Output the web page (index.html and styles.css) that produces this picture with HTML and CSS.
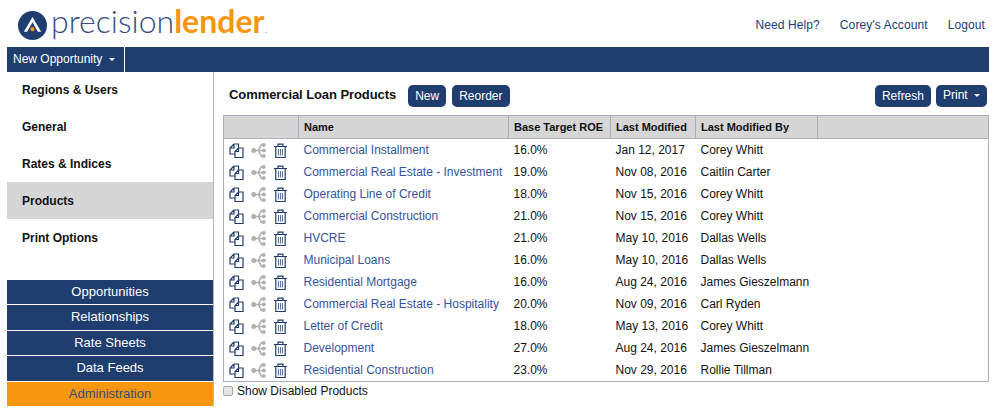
FILE: index.html
```html
<!DOCTYPE html>
<html lang="en">

<head>
  <meta charset="UTF-8" />
  <title>Products | PrecisionLender</title>
  <link rel="stylesheet" href="styles.css">
</head>

<body>
  <svg class="icon-defs" width="0" height="0">
    <symbol id="copy" viewBox="0 0 15 15">
      <path d="M5 1H9.500V5M5 1L1 5V11H6M5 1V5H1" fill="none" stroke="#203d6f" stroke-width="1.200" />
      <path d="M9.500 5H14V14.500H6V8.500zM9.500 5V8.500H6" fill="#fff" stroke="#203d6f" stroke-width="1.200" />
    </symbol>
    <symbol id="share" viewBox="0 0 15 15">
      <path d="M2.500 7.500h12M12.500 1.500H10.500L7.500 7.500L10.500 13.500h2" fill="none" stroke="#b0b0b0" stroke-width="1.600" />
      <circle cx="2.800" cy="7.500" r="2.500" fill="#b0b0b0" />
      <circle cx="12.800" cy="2" r="1.900" fill="#b0b0b0" />
      <circle cx="12.800" cy="7.500" r="1.900" fill="#b0b0b0" />
      <circle cx="12.800" cy="13" r="1.900" fill="#b0b0b0" />
    </symbol>
    <symbol id="trash" viewBox="0 0 15 15">
      <path d="M1 3.500h13M5 3.500V1.200h5v2.300M2.800 3.500v11h9.400v-11" fill="none" stroke="#203d6f" stroke-width="1.200" />
      <path d="M5.500 6v6.500M7.500 6v6.500M9.500 6v6.500" fill="none" stroke="#5f7394" stroke-width="1.100" />
    </symbol>
  </svg>

  <header class="top-header">
    <div class="logo">
      <svg class="logo-mark" viewBox="0 0 32 32" width="29" height="29">
        <circle cx="16" cy="16" r="16" fill="#203d6f" />
        <path d="M16 6.500L25.500 23H22L16 12.500L10 23H6.500z" fill="#fff" />
        <circle cx="16" cy="20" r="2.300" fill="#f7960f" />
      </svg>
      <span class="logo-text">precision<strong>lender</strong><small>.</small></span>
    </div>
    <nav class="top-links">
      <a href="#">Need Help?</a>
      <a href="#">Corey's Account</a>
      <a href="#">Logout</a>
    </nav>
  </header>

  <div class="nav-bar">
    <a class="opp-menu" href="#">New Opportunity <span class="caret"></span></a>
  </div>

  <div class="layout">
    <aside class="sidebar">
      <ul class="side-menu">
        <li><a href="#">Regions &amp; Users</a></li>
        <li><a href="#">General</a></li>
        <li><a href="#">Rates &amp; Indices</a></li>
        <li class="active"><a href="#">Products</a></li>
        <li><a href="#">Print Options</a></li>
      </ul>
      <div class="section-menu">
        <a href="#">Opportunities</a>
        <a href="#">Relationships</a>
        <a href="#">Rate Sheets</a>
        <a href="#">Data Feeds</a>
        <a class="current" href="#">Administration</a>
      </div>
    </aside>

    <main class="content">
      <div class="toolbar">
        <h4>Commercial Loan Products</h4>
        <button>New</button>
        <button>Reorder</button>
        <div class="toolbar-right">
          <button class="btn-refresh">Refresh</button>
          <button class="btn-print">Print <span class="caret"></span></button>
        </div>
      </div>

      <table class="products">
        <thead>
          <tr>
            <th class="col-icons"></th>
            <th class="col-name">Name</th>
            <th class="col-roe">Base Target ROE</th>
            <th class="col-date">Last Modified</th>
            <th class="col-by">Last Modified By</th>
            <th></th>
          </tr>
        </thead>
        <tbody id="productRows"></tbody>
      </table>

      <label class="show-disabled"><input type="checkbox" /> Show Disabled Products</label>
    </main>
  </div>

  <script>
    const products = [
      ["Commercial Installment", "16.0%", "Jan 12, 2017", "Corey Whitt"],
      ["Commercial Real Estate - Investment", "19.0%", "Nov 08, 2016", "Caitlin Carter"],
      ["Operating Line of Credit", "18.0%", "Nov 15, 2016", "Corey Whitt"],
      ["Commercial Construction", "21.0%", "Nov 15, 2016", "Corey Whitt"],
      ["HVCRE", "21.0%", "May 10, 2016", "Dallas Wells"],
      ["Municipal Loans", "16.0%", "May 10, 2016", "Dallas Wells"],
      ["Residential Mortgage", "16.0%", "Aug 24, 2016", "James Gieszelmann"],
      ["Commercial Real Estate - Hospitality", "20.0%", "Nov 09, 2016", "Carl Ryden"],
      ["Letter of Credit", "18.0%", "May 13, 2016", "Corey Whitt"],
      ["Development", "27.0%", "Aug 24, 2016", "James Gieszelmann"],
      ["Residential Construction", "23.0%", "Nov 29, 2016", "Rollie Tillman"]
    ];

    const icon = name => `<svg class="row-icon" width="15" height="15"><use href="#${name}"></use></svg>`;

    document.getElementById("productRows").innerHTML = products.map(p => `
      <tr>
        <td class="icons">${icon("copy")}${icon("share")}${icon("trash")}</td>
        <td><a href="#">${p[0]}</a></td>
        <td>${p[1]}</td>
        <td>${p[2]}</td>
        <td>${p[3]}</td>
        <td></td>
      </tr>
    `).join("");
  </script>
</body>

</html>
```

FILE: styles.css
```css
body {
  margin: 0;
  padding: 0 10px 0 7px;
  font-family: "Liberation Sans", Arial, sans-serif;
  font-size: 12px;
  color: #111;
  background-color: #fff;
  overflow: hidden;
}

a {
  text-decoration: none;
}

.icon-defs {
  display: block;
  height: 0;
}

.top-header {
  height: 47px;
  display: flex;
  align-items: center;
  justify-content: space-between;
}

.logo {
  display: flex;
  align-items: center;
  gap: 4px;
  padding: 3px 0 0 11px;
}

.logo-mark {
  flex-shrink: 0;
}

.logo-text {
  font-family: Lato, sans-serif;
  font-weight: 300;
  font-size: 32px;
  line-height: 38px;
  color: #33507f;
}

.logo-text strong {
  font-weight: 700;
  color: #f7960f;
}

.logo-text small {
  font-size: 12px;
  color: #8d9bb3;
}

.top-links {
  display: flex;
  gap: 20px;
  padding: 2px 4px 0 0;
  letter-spacing: 0.1px;
}

.top-links a {
  color: #203d6f;
}

.nav-bar {
  height: 25px;
  background-color: #203d6f;
  display: flex;
}

.opp-menu {
  padding: 0 9px 0 6px;
  line-height: 25px;
  color: #fff;
  border-right: 1px solid #fff;
}

.caret {
  display: inline-block;
  margin-left: 3px;
  vertical-align: middle;
  border-top: 3px solid #fff;
  border-left: 3px solid transparent;
  border-right: 3px solid transparent;
}

.layout {
  display: flex;
  height: 334px;
}

.sidebar {
  width: 206px;
  flex-shrink: 0;
  border-right: 1px solid #b9b9b9;
  display: flex;
  flex-direction: column;
  justify-content: space-between;
}

.side-menu {
  list-style: none;
  margin: -1px 0 0;
  padding: 0;
}

.side-menu li {
  height: 37px;
}

.side-menu a {
  display: block;
  padding-left: 15px;
  line-height: 38px;
  font-weight: bold;
  color: #111;
}

.side-menu .active {
  background-color: #d6d6d6;
}

.section-menu {
  display: flex;
  flex-direction: column;
  gap: 1px;
}

.section-menu a {
  height: 24.500px;
  line-height: 24px;
  text-align: center;
  font-size: 13px;
  color: #fff;
  background-color: #203d6f;
}

.section-menu .current {
  color: #33507f;
  background-color: #f7960f;
}

.content {
  flex: 1;
  padding-left: 9px;
}

.toolbar {
  height: 38px;
  padding: 5px 0 0 6px;
  display: flex;
  align-items: center;
  gap: 6px;
}

.toolbar h4 {
  margin: 0 6px 4px 0;
  font-size: 13px;
  font-weight: bold;
  letter-spacing: -0.08px;
}

.toolbar-right {
  margin-left: auto;
  display: flex;
  gap: 5px;
  padding-right: 2px;
}

button {
  height: 22px;
  padding: 0 7px;
  font-family: inherit;
  font-size: 12px;
  color: #fff;
  background-color: #203d6f;
  border: none;
  border-radius: 5px;
  cursor: pointer;
}

.btn-print {
  padding-bottom: 3px;
}

.btn-print .caret {
  vertical-align: middle;
}

.products {
  width: 766px;
  table-layout: fixed;
  border-collapse: collapse;
  border: 1px solid #a8b0bb;
}

.products th {
  height: 22px;
  padding: 0 5px;
  text-align: left;
  font-size: 11px;
  background-color: #d6d6d6;
  border: 1px solid #a8b0bb;
}

.products td {
  height: 22px;
  padding: 0 5px;
  white-space: nowrap;
}

.products td a {
  color: #33549a;
}

.col-icons {
  width: 64px;
}

.col-name {
  width: 199px;
}

.col-roe {
  width: 91px;
}

.col-date {
  width: 74px;
}

.col-by {
  width: 111px;
}

.icons {
  font-size: 0;
}

.row-icon {
  margin-right: 7px;
  vertical-align: middle;
}

.show-disabled {
  display: flex;
  align-items: center;
  gap: 4px;
  height: 18px;
}

.show-disabled input {
  appearance: none;
  margin: 0;
  width: 10px;
  height: 10px;
  background-color: #e4e4e4;
  border: 1px solid #a9a9a9;
  border-radius: 2px;
}
```
